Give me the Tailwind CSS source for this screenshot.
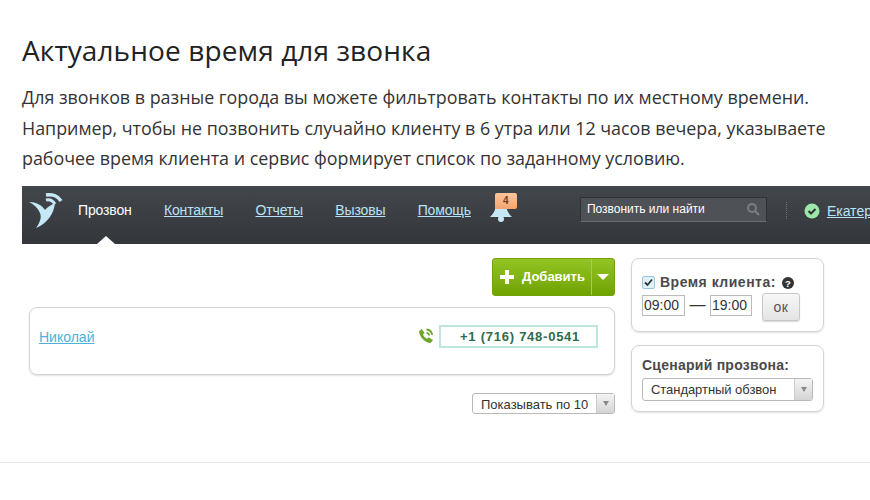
<!DOCTYPE html>
<html lang="ru">
<head>
  <meta charset="UTF-8">
  <title>Актуальное время для звонка</title>
  <script src="https://cdn.jsdelivr.net/npm/@tailwindcss/browser@4"></script>
</head>
<body class="bg-white w-[870px] h-[500px] overflow-hidden font-['Open_Sans',sans-serif]">
  <div class="pl-[22px] pt-[31px]">
    <h1 class="text-[28px] leading-[38px] text-[#222] tracking-[0.11px]">Актуальное время для звонка</h1>
    <p class="mt-[13px] text-[17.86px] leading-[30.6px] text-[#333] w-[848px]">Для звонков в разные города вы можете фильтровать контакты по их местному времени.<br>Например, чтобы не позвонить случайно клиенту в 6 утра или 12 часов вечера, указываете<br>рабочее время клиента и сервис формирует список по заданному условию.</p>
  </div>

  <div class="ml-[22px] mt-[12.2px] h-[58px] bg-gradient-to-b from-[#43474b] to-[#33363a] flex items-start overflow-hidden font-['Liberation_Sans',sans-serif] text-[14px] relative">
    <svg class="ml-[6px] mt-[5px] shrink-0" width="38" height="40" viewBox="0 0 38 40">
      <path d="M1 11 C8 11 14 14 17 19 C19 16 23 14 27 12 C26 22 20 32 8 37 C13 30 14 25 11 20 C9 16 5 13 1 11Z" fill="#c6e8f6"/>
      <path d="M18 4 C24 3 30 5 33 10" fill="none" stroke="#c6e8f6" stroke-width="3.500"/>
      <path d="M18 9 C22 8 25 10 27 13" fill="none" stroke="#c6e8f6" stroke-width="3"/>
    </svg>
    <nav class="flex items-center gap-[32.3px] ml-[12px] mt-[16px] h-[18px] tracking-[-0.15px]">
      <span class="text-white">Прозвон</span>
      <a class="underline text-[#b9e3f5]">Контакты</a>
      <a class="underline text-[#b9e3f5]">Отчеты</a>
      <a class="underline text-[#b9e3f5]">Вызовы</a>
      <a class="underline text-[#b9e3f5]">Помощь</a>
    </nav>
    <div class="relative w-[26px] h-[26px] ml-[18px] mt-[9px] shrink-0">
      <svg width="24" height="28" viewBox="0 0 24 28" class="absolute left-0 top-0">
        <path d="M12 2 C7 2 7 7 6.500 12 C6 17 3 20 1 22 L23 22 C21 20 18 17 17.500 12 C17 7 17 2 12 2Z" fill="#c6e8f6"/>
        <circle cx="12" cy="24" r="3" fill="#c6e8f6"/>
      </svg>
      <span class="absolute left-[6px] top-[-2px] w-[22px] h-[16px] rounded-[2px] bg-gradient-to-b from-[#fbc79d] to-[#f3a36f] text-[#7a3d1d] text-[10px] leading-[16px] font-bold text-center">4</span>
    </div>
    <div class="ml-[65px] mt-[11px] w-[187px] h-[25px] bg-[#4e5256] border border-[#2e3134] border-b-[#6a6d70] flex items-center justify-between px-[6px] shrink-0">
      <span class="text-white text-[12px]">Позвонить или найти</span>
      <svg width="14" height="14" viewBox="0 0 14 14" fill="none" stroke="#7b7f83" stroke-width="2"><circle cx="6" cy="6" r="4"/><path d="M9 9l4 4"/></svg>
    </div>
    <div class="ml-[19px] mt-[16px] h-[17px] border-l border-dotted border-[#6f7276] shrink-0"></div>
    <svg class="ml-[17px] mt-[17px] shrink-0" width="16" height="16" viewBox="0 0 16 16"><circle cx="8" cy="8" r="7.5" fill="#9be8a8"/><path d="M4.5 8l2.5 2.500 4.500-4.500" fill="none" stroke="#2f3336" stroke-width="2"/></svg>
    <a class="ml-[7px] mt-[15px] underline text-[#b9e3f5] whitespace-nowrap">Екатерина</a>
    <span class="absolute left-[75px] bottom-0 w-0 h-0 border-x-[9px] border-x-transparent border-b-[8px] border-b-white"></span>
  </div>

  <div class="ml-[29px] mt-[14px] w-[795px] flex gap-[16px] items-start font-['Liberation_Sans',sans-serif] text-[#333]">
    <div class="w-[586px] shrink-0">
      <div class="flex justify-end">
        <div class="flex w-[123px] h-[38px] rounded-[3px] border border-[#72a10a] bg-gradient-to-b from-[#93c422] to-[#6fa300] text-white font-bold text-[13px]">
          <div class="flex items-center flex-1 pl-[7px] gap-[8px]">
            <svg width="14" height="14" viewBox="0 0 14 14"><path d="M5 0h4v5h5v4H9v5H5V9H0V5h5z" fill="#fff"/></svg>
            <span>Добавить</span>
          </div>
          <div class="w-[23px] border-l border-[#a5cc58] flex items-center justify-center">
            <span class="w-0 h-0 border-x-[6px] border-x-transparent border-t-[6px] border-t-white"></span>
          </div>
        </div>
      </div>
      <div class="mt-[11px] h-[68px] rounded-[8px] border border-[#d4d4d4] shadow-[0_1px_2px_rgba(0,0,0,0.12)] bg-white flex items-start justify-between pl-[9px] pr-[16px] pt-[17px]">
        <a class="underline text-[#4cb2dc] text-[14px] mt-[2px]">Николай</a>
        <div class="flex items-center gap-[5px]">
          <svg width="16" height="16" viewBox="0 0 16 16"><path d="M1 3.200 3.800 1 6.500 5 5 6.500c.7 1.800 2.200 3.400 4 4.200L10.500 9.300 15 12l-2.300 3C7 15 1.500 9 1 3.200z" fill="#6fa62a"/><path d="M8.500 1.500c3 .3 5.300 2.500 5.700 5.500M8.500 4.800c1.500.2 2.500 1.200 2.700 2.700" fill="none" stroke="#6fa62a" stroke-width="1.800"/></svg>
          <div class="w-[159px] h-[23px] border-2 border-[#bfe6dd] pl-[19px] text-[#2e6b4e] font-bold text-[13px] leading-[19px] tracking-[0.75px]">+1 (716) 748-0541</div>
        </div>
      </div>
      <div class="mt-[18px] flex justify-end">
        <div class="flex w-[143px] h-[21px] rounded-[3px] border border-[#b9b9b9] text-[13px] leading-[22px] bg-white">
          <span class="flex-1 pl-[8px]">Показывать по 10</span>
          <span class="w-[18px] border-l border-[#ccc] bg-gradient-to-b from-[#f4f4f4] to-[#d4d4d4] flex items-center justify-center"><span class="w-0 h-0 border-x-[3.500px] border-x-transparent border-t-[5px] border-t-[#888]"></span></span>
        </div>
      </div>
    </div>
    <div class="w-[193px] shrink-0 flex flex-col gap-[13px]">
      <div class="h-[74px] rounded-[8px] border border-[#d4d4d4] shadow-[0_1px_2px_rgba(0,0,0,0.12)] pl-[10px] pt-[16px]">
        <div class="flex items-center text-[14px] font-bold text-[#4a4a4a] h-[16px]">
          <span class="w-[13px] h-[13px] rounded-[2px] border border-[#9cc5dd] bg-[#dff1fa] flex items-center justify-center mr-[5px]"><svg width="11" height="11" viewBox="0 0 11 11"><path d="M2 5.500l2.500 2.500 4.500-5.500" fill="none" stroke="#333" stroke-width="1.800"/></svg></span>
          <span class="tracking-[0.5px]">Время клиента:</span>
          <svg class="ml-[6px]" width="12" height="12" viewBox="0 0 12 12"><circle cx="6" cy="6" r="6" fill="#333"/><text x="6" y="9.500" text-anchor="middle" font-size="9.500" font-weight="bold" fill="#fff" font-family="Liberation Sans">?</text></svg>
        </div>
        <div class="flex items-start mt-[2px]">
          <span class="w-[43px] h-[21px] border border-[#bbb] text-[14px] leading-[19px] pl-[1px] mt-[2px]">09:00</span>
          <span class="w-[25px] text-center text-[16px] leading-[20px] mt-[2px]">—</span>
          <span class="w-[42px] h-[21px] border border-[#bbb] text-[14px] leading-[19px] pl-[1px] mt-[2px]">19:00</span>
          <span class="ml-[10px] w-[38px] h-[28px] rounded-[3px] border border-[#c8c8c8] bg-gradient-to-b from-[#f7f7f7] to-[#e4e4e4] shadow-[0_1px_1px_rgba(0,0,0,0.15)] text-[14px] tracking-[0.5px] leading-[27px] text-center text-[#555]">ок</span>
        </div>
      </div>
      <div class="h-[67px] rounded-[8px] border border-[#d4d4d4] shadow-[0_1px_2px_rgba(0,0,0,0.12)] pl-[10px] pt-[11px]">
        <div class="text-[14px] font-bold text-[#4a4a4a] leading-[17px] tracking-[0.25px]">Сценарий прозвона:</div>
        <div class="flex mt-[4px] w-[171px] h-[23px] rounded-[3px] border border-[#b9b9b9] text-[13px] leading-[21px]">
          <span class="flex-1 pl-[8px] tracking-[-0.05px]">Стандартный обзвон</span>
          <span class="w-[18px] border-l border-[#ccc] bg-gradient-to-b from-[#f4f4f4] to-[#d4d4d4] flex items-center justify-center"><span class="w-0 h-0 border-x-[3.500px] border-x-transparent border-t-[5px] border-t-[#888]"></span></span>
        </div>
      </div>
    </div>
  </div>
  <div class="mt-[48px] border-t border-[#e5e5e5]"></div>
</body>
</html>
